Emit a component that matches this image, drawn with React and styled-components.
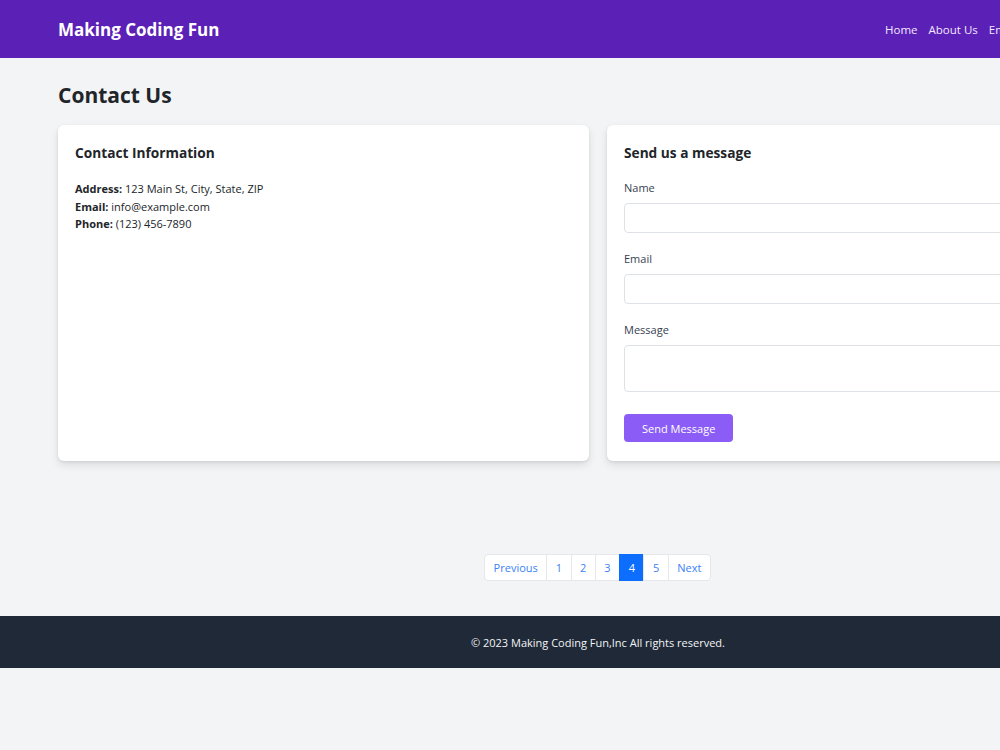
import styled, { createGlobalStyle } from "styled-components"

const GlobalStyle = createGlobalStyle`
    body {
        margin: 0;
        background-color: #f3f4f6;
        font-family: 'Open Sans', 'Noto Sans', sans-serif;
        color: #212529;
    }
    * { box-sizing: border-box; }
`

export default function App() {
    const pages = ["Previous", "1", "2", "3", "4", "5", "Next"]
    return (
        <Page>
            <GlobalStyle />
            <Header>
                <Inner>
                    <Brand>Making Coding Fun</Brand>
                    <Nav>
                        <NavLink>Home</NavLink>
                        <NavLink>About Us</NavLink>
                        <NavLink>Employees</NavLink>
                        <NavLink>Contact Us</NavLink>
                    </Nav>
                </Inner>
            </Header>

            <Main>
                <Title>Contact Us</Title>
                <Cards>
                    <Card>
                        <CardTitle>Contact Information</CardTitle>
                        <Info>
                            <p><b>Address:</b> 123 Main St, City, State, ZIP</p>
                            <p><b>Email:</b> info@example.com</p>
                            <p><b>Phone:</b> (123) 456-7890</p>
                        </Info>
                    </Card>
                    <Card>
                        <CardTitle>Send us a message</CardTitle>
                        <Field>
                            <Label>Name</Label>
                            <Input />
                        </Field>
                        <Field>
                            <Label>Email</Label>
                            <Input />
                        </Field>
                        <Field>
                            <Label>Message</Label>
                            <TextArea />
                        </Field>
                        <SendButton>Send Message</SendButton>
                    </Card>
                </Cards>

                <Pagination>
                    {pages.map((p) => (
                        <PageItem key={p} $active={p === "4"}>{p}</PageItem>
                    ))}
                </Pagination>
            </Main>

            <Footer>© 2023 Making Coding Fun,Inc All rights reserved.</Footer>
        </Page>
    )
}

const Page = styled.div`
    width: 1196px;
`
const Header = styled.header`
    background-color: #5b21b6;
    height: 58px;
`
const Inner = styled.div`
    height: 100%;
    padding: 0 58px;
    display: flex;
    align-items: center;
    justify-content: space-between;
`
const Brand = styled.div`
    color: white;
    font-size: 17px;
    font-weight: 700;
`
const Nav = styled.nav`
    display: flex;
    gap: 11px;
    padding-right: 22px;
`
const NavLink = styled.a`
    color: #f3e8ff;
    font-size: 11.5px;
`
const Main = styled.main`
    padding: 0 58px;
`
const Title = styled.h1`
    margin: 0;
    padding: 23px 0 16px;
    font-size: 21px;
    font-weight: 700;
    line-height: 28px;
`
const Cards = styled.div`
    display: grid;
    grid-template-columns: 1fr 1fr;
    gap: 18px;
`
const Card = styled.div`
    background: white;
    border-radius: 6px;
    box-shadow: 0 4px 8px rgba(0, 0, 0, 0.1), 0 1px 3px rgba(0, 0, 0, 0.08);
    padding: 18px 17px;
    min-height: 336px;
`
const CardTitle = styled.h2`
    margin: 0 0 17px;
    font-size: 13.7px;
    font-weight: 700;
    line-height: 20px;
`
const Info = styled.div`
    font-size: 11px;
    line-height: 17.5px;
    p { margin: 0; }
`
const Field = styled.div`
    margin-bottom: 18px;
`
const Label = styled.label`
    display: block;
    font-size: 11px;
    line-height: 16px;
    color: #374151;
    margin-bottom: 7px;
`
const Input = styled.input`
    display: block;
    width: 100%;
    height: 30px;
    border: 1px solid #dee2e6;
    border-radius: 4px;
`
const TextArea = styled.textarea`
    display: block;
    width: 100%;
    height: 47px;
    border: 1px solid #dee2e6;
    border-radius: 4px;
    resize: none;
`
const SendButton = styled.button`
    margin-top: 4px;
    background-color: #8b5cf6;
    color: white;
    border: none;
    border-radius: 4px;
    height: 28px;
    padding: 0 18px;
    font-family: inherit;
    font-size: 11px;
`
const Pagination = styled.div`
    display: flex;
    justify-content: center;
    margin: 93px 0 35px;
    & > div:first-child { border-radius: 4px 0 0 4px; }
    & > div:last-child { border-radius: 0 4px 4px 0; }
`
const PageItem = styled.div`
    height: 27px;
    padding: 0 8.5px;
    display: flex;
    align-items: center;
    font-size: 11px;
    background: ${(p) => (p.$active ? "#0d6efd" : "white")};
    color: ${(p) => (p.$active ? "white" : "#3b82f6")};
    border: 1px solid ${(p) => (p.$active ? "#0d6efd" : "#e5e7eb")};
    margin-left: -1px;
`
const Footer = styled.footer`
    background-color: #1f2937;
    color: #f3f4f6;
    height: 52px;
    display: flex;
    align-items: center;
    justify-content: center;
    font-size: 11px;
`
